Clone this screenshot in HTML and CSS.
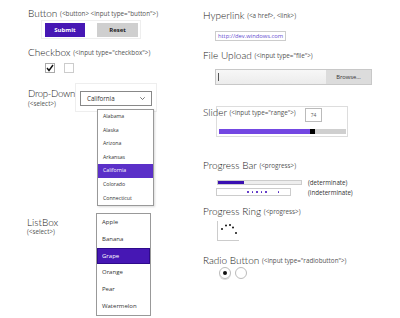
FILE: index.html
```html
<!DOCTYPE html>
<html lang="en">
<head>
  <meta charset="UTF-8" />
  <title>Controls</title>
  <link rel="stylesheet" href="styles.css">
</head>
<body>
  <div class="page">
    <div class="col left">
      <div class="title t-button">Button <span class="small">(&lt;button&gt; &lt;input type="button"&gt;)</span></div>
      <div class="panel btn-panel">
        <button class="btn btn-primary">Submit</button>
        <button class="btn btn-plain">Reset</button>
      </div>

      <div class="title t-check">Checkbox <span class="small">(&lt;input type="checkbox"&gt;)</span></div>
      <div class="checks">
        <span class="check on">
          <svg width="8" height="8" viewBox="0 0 8 8"><polyline points="1,4 3,6.5 7,1" fill="none" stroke="#111" stroke-width="1.4"/></svg>
        </span>
        <span class="check"></span>
      </div>

      <div class="row drop-row">
        <div class="row-label">
          <div class="title tight">Drop-Down</div>
          <div class="small">(&lt;select&gt;)</div>
        </div>
        <div class="panel select-panel">
          <div class="select">
            <span>California</span>
            <svg width="5" height="3" viewBox="0 0 5 3"><polyline points="0.3,0.3 2.5,2.5 4.7,0.3" fill="none" stroke="#555" stroke-width="0.8"/></svg>
            <ul class="dropdown">
              <li>Alabama</li>
              <li>Alaska</li>
              <li>Arizona</li>
              <li>Arkansas</li>
              <li class="selected">California</li>
              <li>Colorado</li>
              <li>Connecticut</li>
            </ul>
          </div>
        </div>
      </div>

      <div class="row list-row">
        <div class="row-label list-label">
          <div class="title">ListBox</div>
          <div class="small">(&lt;select&gt;)</div>
        </div>
        <ul class="listbox">
          <li>Apple</li>
          <li>Banana</li>
          <li class="selected">Grape</li>
          <li>Orange</li>
          <li>Pear</li>
          <li>Watermelon</li>
        </ul>
      </div>
    </div>

    <div class="col right">
      <div class="title t-link">Hyperlink <span class="small">(&lt;a href&gt;, &lt;link&gt;)</span></div>
      <div class="link-box"><a href="#">http://dev.windows.com</a></div>

      <div class="title t-file">File Upload <span class="small">(&lt;input type="file"&gt;)</span></div>
      <div class="file">
        <div class="file-field"><span class="caret"></span></div>
        <div class="file-btn">Browse...</div>
      </div>

      <div class="title t-slider">Slider <span class="small">(&lt;input type="range"&gt;)</span></div>
      <div class="slider-panel">
        <div class="slider-value">74</div>
        <div class="track">
          <div class="track-fill"></div>
          <div class="thumb"></div>
        </div>
      </div>

      <div class="title t-progress">Progress Bar <span class="small">(&lt;progress&gt;)</span></div>
      <div class="prog-row">
        <div class="prog-cell"><div class="bar"><div class="bar-fill"></div></div></div>
        <span class="prog-note">(determinate)</span>
      </div>
      <div class="prog-row ind-row">
        <div class="prog-cell">
          <div class="bar-ind">
            <i></i><i></i><i></i><i></i><i></i><i class="far"></i>
          </div>
        </div>
        <span class="prog-note">(indeterminate)</span>
      </div>

      <div class="title t-ring">Progress Ring <span class="small">(&lt;progress&gt;)</span></div>
      <div class="ring">
        <svg width="22" height="20" viewBox="0 0 22 20">
          <circle cx="5" cy="8" r="1" fill="#111"/>
          <circle cx="9" cy="4.5" r="1" fill="#111"/>
          <circle cx="13" cy="4" r="1" fill="#111"/>
          <circle cx="16" cy="6.5" r="1" fill="#111"/>
          <circle cx="19" cy="12" r="1" fill="#111"/>
        </svg>
      </div>

      <div class="title t-radio">Radio Button <span class="small">(&lt;input type="radiobutton"&gt;)</span></div>
      <div class="radios">
        <span class="radio on"><span class="dot"></span></span>
        <span class="radio"></span>
      </div>
    </div>
  </div>
</body>
</html>
```

FILE: styles.css
```css
body {
  margin: 0;
  background: #fff;
  font-family: 'Open Sans', sans-serif;
  color: #333;
}
.page {
  display: grid;
  grid-template-columns: 175px 1fr;
  width: 400px;
  height: 318px;
  overflow: hidden;
}
.col {
  padding-left: 28px;
}
.title {
  font-family: Lato, 'Open Sans', sans-serif;
  font-size: 10px;
  font-weight: 300;
  line-height: 12px;
  height: 12px;
  white-space: nowrap;
  color: #222;
}
.title.tight {
  font-size: 9.6px;
  letter-spacing: -0.3px;
}
.small {
  font-family: 'Open Sans', sans-serif;
  font-size: 6.3px;
  font-weight: 400;
  line-height: 8px;
  color: #555;
  margin-left: 0;
  letter-spacing: 0;
}
.title .small {
  vertical-align: 1px;
}
.panel {
  border: 1px solid #eee;
  box-sizing: border-box;
}

/* buttons */
.t-button { margin-top: 7px; }
.btn-panel {
  display: flex;
  gap: 12px;
  width: 100px;
  height: 19px;
  margin: 1px 0 0 13px;
  padding: 2px 2px 0 3px;
}
.btn {
  height: 14px;
  border: none;
  padding: 0;
  font-family: inherit;
  font-size: 6px;
  font-weight: 700;
}
.btn-primary {
  width: 40px;
  background: #4617b4;
  color: #fff;
}
.btn-plain {
  width: 41px;
  background: #cfcfcf;
  color: #222;
}

/* checkboxes */
.t-check { margin-top: 7px; }
.checks {
  display: flex;
  gap: 9px;
  margin: 5px 0 0 17px;
}
.check {
  width: 10px;
  height: 10px;
  box-sizing: border-box;
  border: 1px solid #ccc;
  display: flex;
  align-items: center;
  justify-content: center;
}
.check.on { border-color: #aaa; }

/* drop-down */
.row {
  display: flex;
  align-items: flex-start;
}
.drop-row { margin-top: 10px; }
.row-label {
  width: 47px;
  padding-top: 5px;
}
.row-label .small { display: block; }
.select-panel {
  width: 82px;
  height: 29px;
  padding: 7px 4px 0 4px;
}
.select {
  position: relative;
  height: 15px;
  box-sizing: border-box;
  border: 1px solid #888;
  display: flex;
  align-items: center;
  justify-content: space-between;
  padding: 0 6px 0 6px;
  font-size: 6.2px;
  color: #333;
}
.dropdown {
  position: absolute;
  top: 17px;
  left: 16px;
  width: 55px;
  margin: 0;
  padding: 0;
  list-style: none;
  border: 1px solid #999;
  background: #fff;
  box-shadow: 1px 1px 2px rgba(0, 0, 0, 0.15);
  z-index: 2;
}
.dropdown li {
  height: 13.6px;
  line-height: 13.6px;
  padding-left: 5px;
  font-size: 5.2px;
  color: #333;
}
.dropdown li.selected {
  background: #5b30c8;
  color: #fff;
}

/* listbox */
.list-row { margin-top: 101px; }
.list-label {
  width: 69px;
  padding-top: 3px;
  margin-left: -1px;
}
.listbox {
  width: 53px;
  margin: 0;
  padding: 0;
  list-style: none;
  border: 1px solid #999;
}
.listbox li {
  height: 16.8px;
  line-height: 16.8px;
  padding-left: 5px;
  font-size: 6px;
  color: #333;
}
.listbox li.selected {
  background: #4617b4;
  color: #fff;
  box-shadow: inset 0 0 0 1px #2e0a8c;
}

/* hyperlink */
.t-link { margin-top: 9px; }
.link-box {
  display: inline-block;
  margin: 5px 0 0 12px;
  border: 1px solid #ccc;
  padding: 0 2px;
  height: 10px;
  box-sizing: border-box;
  font-size: 5.8px;
  line-height: 8px;
}
.link-box a {
  color: #5f4bd0;
  text-decoration: none;
}

/* file upload */
.t-file { margin-top: 6px; }
.file {
  display: flex;
  width: 157px;
  height: 16px;
  margin: 8px 0 0 12px;
  border: 1px solid #c8c8c8;
  box-sizing: border-box;
}
.file-field {
  flex: 1;
  background: linear-gradient(#f7f7f7, #ececec);
  position: relative;
}
.caret {
  position: absolute;
  left: 2px;
  top: 3px;
  width: 1px;
  height: 8px;
  background: #555;
}
.file-btn {
  width: 45px;
  background: #dcdcdc;
  font-size: 5.8px;
  line-height: 14px;
  text-align: center;
  color: #333;
}

/* slider */
.t-slider {
  margin-top: 21px;
  position: relative;
  z-index: 1;
}
.slider-panel {
  margin: -12px 0 0 13px;
  width: 132px;
  height: 31px;
  box-sizing: border-box;
  border: 1px solid #ddd;
  padding: 1px 1px 0 2px;
}
.slider-value {
  width: 17px;
  height: 14px;
  box-sizing: border-box;
  margin-left: 86px;
  border: 1px solid #bbb;
  font-size: 4.8px;
  line-height: 12px;
  text-align: center;
  color: #555;
}
.track {
  display: flex;
  margin-top: 7px;
  width: 127px;
  height: 5px;
  background: #cfcfcf;
}
.track-fill {
  width: 91px;
  background: #7347e2;
}
.thumb {
  width: 5px;
  background: #000;
}

/* progress bar */
.t-progress { margin-top: 22px; }
.prog-row {
  display: flex;
  align-items: center;
  margin-top: 8px;
  margin-left: 13px;
  height: 6px;
}
.prog-cell { width: 92px; }
.prog-note {
  font-size: 6.2px;
  color: #333;
}
.bar {
  margin-left: 1px;
  width: 85px;
  height: 5px;
  box-sizing: border-box;
  border: 1px solid #ccc;
  background: #eee;
}
.bar-fill {
  width: 26px;
  height: 3px;
  background: #3a10b2;
}
.ind-row {
  margin-top: 3px;
  height: 8px;
}
.bar-ind {
  width: 75px;
  height: 8px;
  box-sizing: border-box;
  border: 1px solid #ccc;
  display: flex;
  align-items: center;
  padding-left: 30px;
  gap: 3px;
}
.bar-ind i {
  width: 1.5px;
  height: 1.5px;
  background: #4a1cc0;
  border-radius: 50%;
}
.bar-ind i.far { margin-left: 8px; }

/* progress ring */
.t-ring { margin-top: 9px; }
.ring {
  width: 22px;
  height: 20px;
  margin: 4px 0 0 14px;
  border-left: 1px solid #ccc;
  border-bottom: 1px solid #ccc;
  box-sizing: border-box;
}
.ring svg { display: block; margin-left: -1px; }

/* radio */
.t-radio { margin-top: 13px; }
.radios {
  display: flex;
  gap: 4px;
  margin: 1px 0 0 16px;
}
.radio {
  width: 12px;
  height: 12px;
  box-sizing: border-box;
  border: 1px solid #bbb;
  border-radius: 50%;
  display: flex;
  align-items: center;
  justify-content: center;
}
.radio.on { box-shadow: 0 1px 0 #ddd; }
.radio .dot {
  width: 4px;
  height: 4px;
  border-radius: 50%;
  background: #111;
}
```
